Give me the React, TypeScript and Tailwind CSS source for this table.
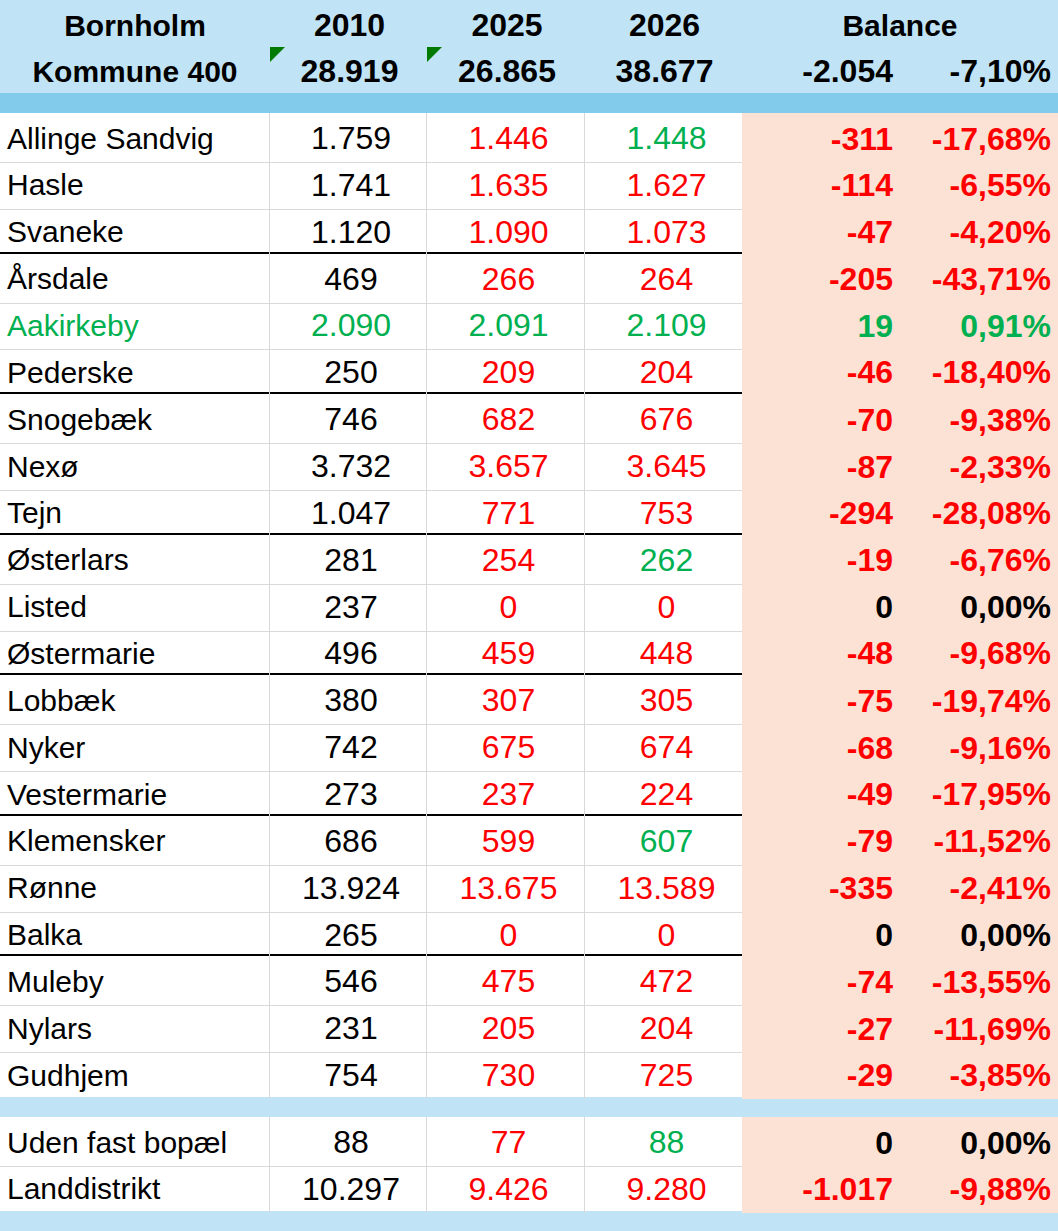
import React from "react";

type Tone = "k" | "r" | "g";

type Row = {
  name: string;
  y2010: string;
  y2025: string;
  y2026: string;
  diff: string;
  pct: string;
  nameTone?: Tone;
  t2010?: Tone;
  t2025?: Tone;
  t2026?: Tone;
  tBal?: Tone;
  thick?: boolean;
  last?: boolean;
};

const tone: Record<Tone, string> = {
  k: "text-black",
  r: "text-[#ff0000]",
  g: "text-[#00b050]",
};

const rows: Row[] = [
  { name: "Allinge Sandvig", y2010: "1.759", y2025: "1.446", y2026: "1.448", diff: "-311", pct: "-17,68%", t2026: "g" },
  { name: "Hasle", y2010: "1.741", y2025: "1.635", y2026: "1.627", diff: "-114", pct: "-6,55%" },
  { name: "Svaneke", y2010: "1.120", y2025: "1.090", y2026: "1.073", diff: "-47", pct: "-4,20%", thick: true },
  { name: "Årsdale", y2010: "469", y2025: "266", y2026: "264", diff: "-205", pct: "-43,71%" },
  { name: "Aakirkeby", y2010: "2.090", y2025: "2.091", y2026: "2.109", diff: "19", pct: "0,91%", nameTone: "g", t2010: "g", t2025: "g", t2026: "g", tBal: "g" },
  { name: "Pederske", y2010: "250", y2025: "209", y2026: "204", diff: "-46", pct: "-18,40%", thick: true },
  { name: "Snogebæk", y2010: "746", y2025: "682", y2026: "676", diff: "-70", pct: "-9,38%" },
  { name: "Nexø", y2010: "3.732", y2025: "3.657", y2026: "3.645", diff: "-87", pct: "-2,33%" },
  { name: "Tejn", y2010: "1.047", y2025: "771", y2026: "753", diff: "-294", pct: "-28,08%", thick: true },
  { name: "Østerlars", y2010: "281", y2025: "254", y2026: "262", diff: "-19", pct: "-6,76%", t2026: "g" },
  { name: "Listed", y2010: "237", y2025: "0", y2026: "0", diff: "0", pct: "0,00%", tBal: "k" },
  { name: "Østermarie", y2010: "496", y2025: "459", y2026: "448", diff: "-48", pct: "-9,68%", thick: true },
  { name: "Lobbæk", y2010: "380", y2025: "307", y2026: "305", diff: "-75", pct: "-19,74%" },
  { name: "Nyker", y2010: "742", y2025: "675", y2026: "674", diff: "-68", pct: "-9,16%" },
  { name: "Vestermarie", y2010: "273", y2025: "237", y2026: "224", diff: "-49", pct: "-17,95%", thick: true },
  { name: "Klemensker", y2010: "686", y2025: "599", y2026: "607", diff: "-79", pct: "-11,52%", t2026: "g" },
  { name: "Rønne", y2010: "13.924", y2025: "13.675", y2026: "13.589", diff: "-335", pct: "-2,41%" },
  { name: "Balka", y2010: "265", y2025: "0", y2026: "0", diff: "0", pct: "0,00%", tBal: "k", thick: true },
  { name: "Muleby", y2010: "546", y2025: "475", y2026: "472", diff: "-74", pct: "-13,55%" },
  { name: "Nylars", y2010: "231", y2025: "205", y2026: "204", diff: "-27", pct: "-11,69%" },
  { name: "Gudhjem", y2010: "754", y2025: "730", y2026: "725", diff: "-29", pct: "-3,85%", last: true },
];

const extra: Row[] = [
  { name: "Uden fast bopæl", y2010: "88", y2025: "77", y2026: "88", diff: "0", pct: "0,00%", t2026: "g", tBal: "k" },
  { name: "Landdistrikt", y2010: "10.297", y2025: "9.426", y2026: "9.280", diff: "-1.017", pct: "-9,88%", last: true },
];

const cols = "grid grid-cols-[270px_157px_158px_157px_158px_158px]";
const numFont = "font-['Liberation_Sans',Arial,sans-serif] text-[32px]";
const nameFont = "font-['Liberation_Sans',Arial,sans-serif] text-[30px]";

function Flag() {
  return (
    <svg className="absolute left-0 top-0" width="15" height="15" viewBox="0 0 15 15">
      <polygon points="0,0 15,0 0,15" fill="#007a00" />
    </svg>
  );
}

function DataRow({ r }: { r: Row }) {
  // grey grid only on the white cells; group ends get a black rule across the full width
  const white = r.thick || r.last ? "" : "border-b border-b-[#d9d9d9]";
  const cell = `flex items-center pt-[1px] ${white}`;
  const bal = `flex items-center justify-end pt-[1px] pr-[7px] bg-[#fbe2d5] font-bold ${numFont} ${tone[r.tBal ?? "r"]}`;
  return (
    <>
      <div className={`${cols} ${r.thick ? "h-[44.86px]" : "h-[46.86px]"}`}>
        <div className={`${cell} border-r border-r-[#d9d9d9] pl-[7px] ${nameFont} ${tone[r.nameTone ?? "k"]}`}>{r.name}</div>
        <div className={`${cell} border-r border-r-[#d9d9d9] justify-center pl-[6px] ${numFont} ${tone[r.t2010 ?? "k"]}`}>{r.y2010}</div>
        <div className={`${cell} border-r border-r-[#d9d9d9] justify-center pl-[6px] ${numFont} ${tone[r.t2025 ?? "r"]}`}>{r.y2025}</div>
        <div className={`${cell} justify-center pl-[6px] ${numFont} ${tone[r.t2026 ?? "r"]}`}>{r.y2026}</div>
        <div className={bal}>{r.diff}</div>
        <div className={bal}>{r.pct}</div>
      </div>
      {r.thick && <div className="h-[2px] bg-black" />}
    </>
  );
}

export default function App(): React.ReactElement {
  const head = "flex items-center font-bold text-black font-['Liberation_Sans',Arial,sans-serif]";
  return (
    <div className="w-[1058px] h-[1231px] bg-white overflow-hidden">
      <div className="bg-[#c0e4f5]">
        <div className={`${cols} h-[47px]`}>
          <div className={`${head} justify-center text-[30px] pt-[1px]`}>Bornholm</div>
          <div className={`${head} justify-center text-[32px] pl-[2px] pt-[1px]`}>2010</div>
          <div className={`${head} justify-center text-[32px] pl-[2px] pt-[1px]`}>2025</div>
          <div className={`${head} justify-center text-[32px] pl-[2px] pt-[1px]`}>2026</div>
          <div className={`${head} col-span-2 justify-center text-[30px] pt-[1px]`}>Balance</div>
        </div>
        <div className={`${cols} h-[46px]`}>
          <div className={`${head} justify-center text-[30px]`}>Kommune 400</div>
          <div className={`${head} relative justify-center text-[32px] pl-[2px]`}>
            <Flag />
            28.919
          </div>
          <div className={`${head} relative justify-center text-[32px] pl-[2px]`}>
            <Flag />
            26.865
          </div>
          <div className={`${head} justify-center text-[32px] pl-[2px]`}>38.677</div>
          <div className={`${head} justify-end text-[32px] pr-[7px]`}>-2.054</div>
          <div className={`${head} justify-end text-[32px] pr-[7px]`}>-7,10%</div>
        </div>
      </div>
      <div className="h-[20px] bg-[#83cbeb]" />
      {rows.map((r) => (
        <DataRow key={r.name} r={r} />
      ))}
      <div className="h-[20px] bg-[#c0e4f5]" />
      {extra.map((r) => (
        <DataRow key={r.name} r={r} />
      ))}
      <div className="h-[21px] bg-[#c0e4f5]" />
    </div>
  );
}
